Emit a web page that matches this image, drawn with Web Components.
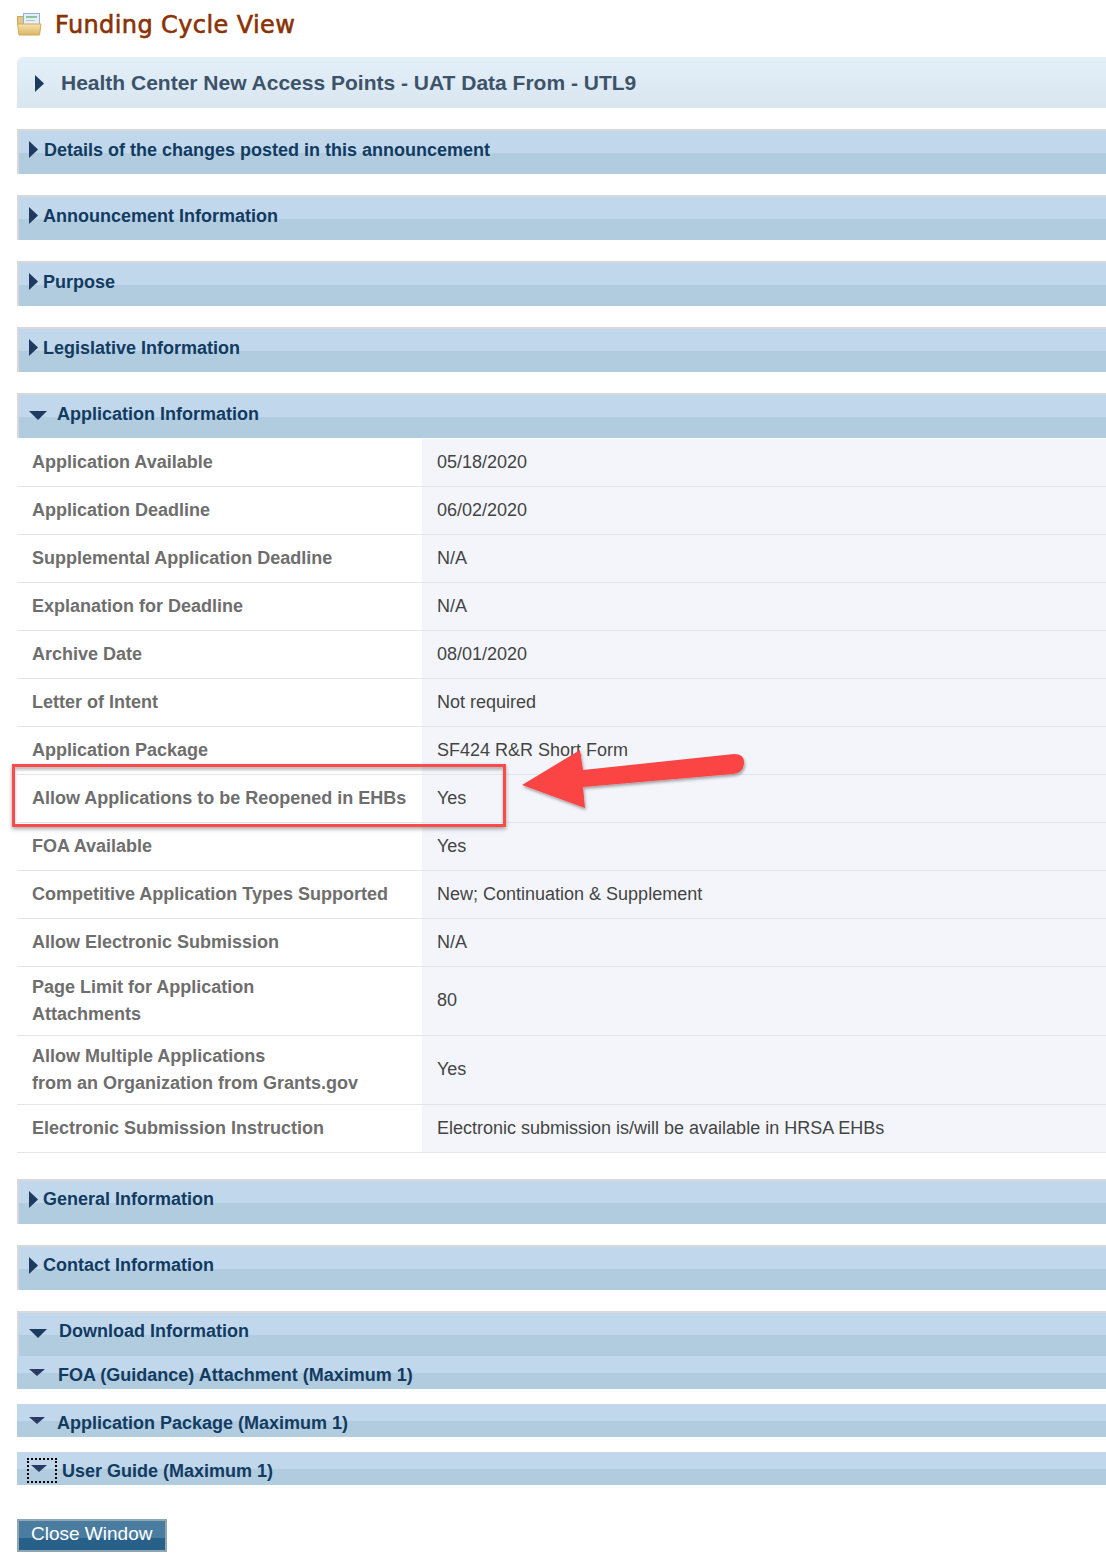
<!DOCTYPE html>
<html>
<head>
<meta charset="utf-8">
<title>Funding Cycle View</title>
<style>
  html, body { margin: 0; padding: 0; background: #fff; }
  body { width: 1106px; height: 1568px; overflow: hidden; position: relative; font-family: "Liberation Sans", Arial, sans-serif; }
  main { display: block; padding-left: 17px; }
</style>
</head>
<body>
<main>
  <fc-title>Funding Cycle View</fc-title>
  <fc-banner>Health Center New Access Points - UAT Data From - UTL9</fc-banner>

  <fc-section label="Details of the changes posted in this announcement" style="--label-x:1px"></fc-section>
  <fc-section label="Announcement Information"></fc-section>
  <fc-section label="Purpose"></fc-section>
  <fc-section label="Legislative Information"></fc-section>
  <fc-section open label="Application Information" style="--label-x:-1px">
    <fc-row label="Application Available">05/18/2020</fc-row>
    <fc-row label="Application Deadline">06/02/2020</fc-row>
    <fc-row label="Supplemental Application Deadline">N/A</fc-row>
    <fc-row label="Explanation for Deadline">N/A</fc-row>
    <fc-row label="Archive Date">08/01/2020</fc-row>
    <fc-row label="Letter of Intent">Not required</fc-row>
    <fc-row label="Application Package">SF424 R&amp;R Short Form</fc-row>
    <fc-row label="Allow Applications to be Reopened in EHBs">Yes</fc-row>
    <fc-row label="FOA Available">Yes</fc-row>
    <fc-row label="Competitive Application Types Supported">New; Continuation &amp; Supplement</fc-row>
    <fc-row label="Allow Electronic Submission">N/A</fc-row>
    <fc-row tall label="Page Limit for Application<br>Attachments">80</fc-row>
    <fc-row tall label="Allow Multiple Applications<br>from an Organization from Grants.gov">Yes</fc-row>
    <fc-row label="Electronic Submission Instruction">Electronic submission is/will be available in HRSA EHBs</fc-row>
  </fc-section>
  <fc-section label="General Information" style="margin-top:26px;--label-y:-1px"></fc-section>
  <fc-section label="Contact Information" style="--label-y:-1px"></fc-section>
  <fc-section open label="Download Information" flush style="--label-x:1px;--label-y:-1px"></fc-section>
  <fc-sub-bar label="FOA (Guidance) Attachment (Maximum 1)"></fc-sub-bar>
  <fc-sub-bar label="Application Package (Maximum 1)" style="--label-x:-1px"></fc-sub-bar>
  <fc-sub-bar focused label="User Guide (Maximum 1)"></fc-sub-bar>
  <fc-close-button>Close Window</fc-close-button>
</main>
<fc-callout></fc-callout>

<script>
const ARROW_RIGHT = '<svg width="9" height="17" viewBox="0 0 9 17"><polygon points="0,0 9,8.5 0,17" fill="#1f3a5f"/></svg>';
const ARROW_DOWN = '<svg width="18" height="9" viewBox="0 0 18 9"><polygon points="0,0 18,0 9,9" fill="#1f3a5f"/></svg>';
const ARROW_DOWN_SMALL = '<svg width="16" height="7" viewBox="0 0 16 7"><polygon points="0,0 16,0 8,7" fill="#2a3866"/></svg>';

class FcTitle extends HTMLElement {
  constructor() {
    super();
    this.attachShadow({ mode: 'open' });
    this.shadowRoot.innerHTML = `
      <style>
        :host { display: flex; align-items: center; height: 57px; box-sizing: border-box; padding-bottom: 7px; }
        svg { width: 25px; height: 24px; margin-right: 13px; flex: none; }
        h1 { margin: 0; font: normal 24px "DejaVu Sans", Verdana, sans-serif; color: #8a3205; -webkit-text-stroke: 0.6px #8a3205; letter-spacing: .4px; }
      </style>
      <svg viewBox="0 0 25 24">
        <defs><linearGradient id="front" x1="0" y1="0" x2="0" y2="1"><stop offset="0" stop-color="#f7e3ab"/><stop offset="1" stop-color="#dcb566"/></linearGradient></defs>
        <path d="M0.5 3.5 h6 l1 2 h3 v6 h-10z" fill="#e2c684" stroke="#cfa959"/>
        <rect x="6.5" y="0.5" width="16" height="11" fill="#e6eef9" stroke="#8db2e0"/>
        <rect x="9" y="3" width="11" height="2" fill="#8cc79a"/>
        <rect x="9" y="7" width="9" height="1" fill="#b7c4d4"/>
        <path d="M0.5 11 h23.5 l-1.5 11 h-20.5z" fill="url(#front)" stroke="#d0aa5c"/>
      </svg>
      <h1><slot></slot></h1>`;
  }
}

class FcBanner extends HTMLElement {
  constructor() {
    super();
    this.attachShadow({ mode: 'open' });
    this.shadowRoot.innerHTML = `
      <style>
        :host { display: flex; align-items: center; height: 51px; margin-bottom: 21px; padding-left: 18px; box-sizing: border-box;
          border-top-left-radius: 6px; border-top: 1px solid #e6eef5;
          background: linear-gradient(#e3eff9, #d9e5ef); color: #3d5369; font-size: 21px; font-weight: bold; }
        span { margin-left: 17px; }
        svg { display: block; flex: none; }
      </style>
      ${ARROW_RIGHT}<span><slot></slot></span>`;
  }
}

class FcSection extends HTMLElement {
  constructor() {
    super();
    this.attachShadow({ mode: 'open' });
  }
  connectedCallback() {
    const open = this.hasAttribute('open');
    const hasRows = this.children.length > 0;
    this.shadowRoot.innerHTML = `
      <style>
        :host { display: block; margin-bottom: ${this.hasAttribute('flush') ? '0' : '21px'}; }
        .bar { display: flex; align-items: flex-start; height: 45px; box-sizing: border-box; padding: 9px 0 0 10px;
          border-top: 2px solid #d8d8d8; border-left: 2px solid #d8d8d8;
          background: linear-gradient(#c1d7ec 0 22px, #b1cbdf 22px); color: #123b61; font-size: 18px; font-weight: bold; line-height: 21px; }
        svg { display: block; flex: none; margin-top: ${open ? '7px' : '1px'}; }
        .label { margin-left: calc(${open ? '11px' : '5px'} + var(--label-x, 0px)); margin-top: var(--label-y, 0px); }
        .body { display: block; padding-top: ${hasRows ? '1px' : '0'}; }
      </style>
      <div class="bar">${open ? ARROW_DOWN : ARROW_RIGHT}<span class="label">${this.getAttribute('label')}</span></div>
      <div class="body"><slot></slot></div>`;
  }
}

class FcSubBar extends HTMLElement {
  constructor() {
    super();
    this.attachShadow({ mode: 'open' });
  }
  connectedCallback() {
    const focused = this.hasAttribute('focused');
    this.shadowRoot.innerHTML = `
      <style>
        :host { display: block; margin-bottom: 15px; }
        .bar { display: flex; align-items: flex-start; height: 33px; box-sizing: border-box; padding: 9px 0 0 12px;
          background: linear-gradient(#c1d7ec 0 17px, #b1cbdf 17px); color: #123b61; font-size: 18px; font-weight: bold; line-height: 21px; }
        .icon { flex: none; position: relative; width: 18px; height: 9px; }
        svg { display: block; position: absolute; left: ${focused ? '2px' : '0'}; top: 4px; }
        .focus { width: 30px; height: 25px; box-sizing: border-box; border: 2px dotted #000; position: absolute; left: -2px; top: -3px; }
        .label { margin-left: calc(${focused ? '15px' : '11px'} + var(--label-x, 0px)); }
      </style>
      <div class="bar">
        <span class="icon">${ARROW_DOWN_SMALL}${focused ? '<span class="focus"></span>' : ''}</span>
        <span class="label">${this.getAttribute('label')}</span>
      </div>`;
  }
}

class FcRow extends HTMLElement {
  constructor() {
    super();
    this.attachShadow({ mode: 'open' });
  }
  connectedCallback() {
    const tall = this.hasAttribute('tall');
    this.shadowRoot.innerHTML = `
      <style>
        :host { display: grid; grid-template-columns: 405px 1fr; font-size: 18px; line-height: 27px; color: #444; }
        .key, .val { display: flex; align-items: center; box-sizing: border-box; min-height: ${tall ? '69px' : '48px'};
          padding: 0 15px; border-bottom: 1px solid #e2e4e6; }
        .key { font-weight: bold; color: #6e6e6e; background: #fff; }
        .val { background: #f3f5fa; padding-bottom: ${tall ? '2px' : '0'}; }
      </style>
      <div class="key"><span>${this.getAttribute('label')}</span></div>
      <div class="val"><span><slot></slot></span></div>`;
  }
}

class FcCloseButton extends HTMLElement {
  constructor() {
    super();
    this.attachShadow({ mode: 'open' });
    this.shadowRoot.innerHTML = `
      <style>
        :host { display: block; margin-top: 34px; }
        button { display: block; width: 150px; height: 33px; padding: 0 0 4px 12px; box-sizing: border-box; text-align: left;
          border: 2px solid #8fa6b6; background: linear-gradient(#4a7ca0 0 17px, #27618a 17px); color: #fff;
          font: 19px "Liberation Sans", Arial, sans-serif; }
      </style>
      <button><slot></slot></button>`;
  }
}

class FcCallout extends HTMLElement {
  constructor() {
    super();
    this.attachShadow({ mode: 'open' });
    this.shadowRoot.innerHTML = `
      <style>
        :host { position: absolute; left: 0; top: 0; width: 1106px; height: 900px; pointer-events: none; display: block; }
        .box { position: absolute; left: 12px; top: 764px; width: 494px; height: 63px; box-sizing: border-box; border: 3px solid #fb4a4a;
          box-shadow: 0 2px 4px rgba(0,0,0,.35), inset 0 3px 3px rgba(0,0,0,.25); }
        svg { position: absolute; left: 515px; top: 745px; overflow: visible; }
      </style>
      <div class="box"></div>
      <svg width="235" height="70" viewBox="515 745 235 70">
        <defs><filter id="s" x="-10%" y="-20%" width="120%" height="150%"><feDropShadow dx="1" dy="2" stdDeviation="1.5" flood-color="#000" flood-opacity=".35"/></filter></defs>
        <path d="M522 785 L580 750 L583 770 L734 754 Q745 754 744 764 Q743 773 733 774 L583 787 L585 808 Z" fill="#fb4545" filter="url(#s)"/>
      </svg>`;
  }
}

customElements.define('fc-title', FcTitle);
customElements.define('fc-banner', FcBanner);
customElements.define('fc-section', FcSection);
customElements.define('fc-sub-bar', FcSubBar);
customElements.define('fc-row', FcRow);
customElements.define('fc-close-button', FcCloseButton);
customElements.define('fc-callout', FcCallout);
</script>
</body>
</html>
